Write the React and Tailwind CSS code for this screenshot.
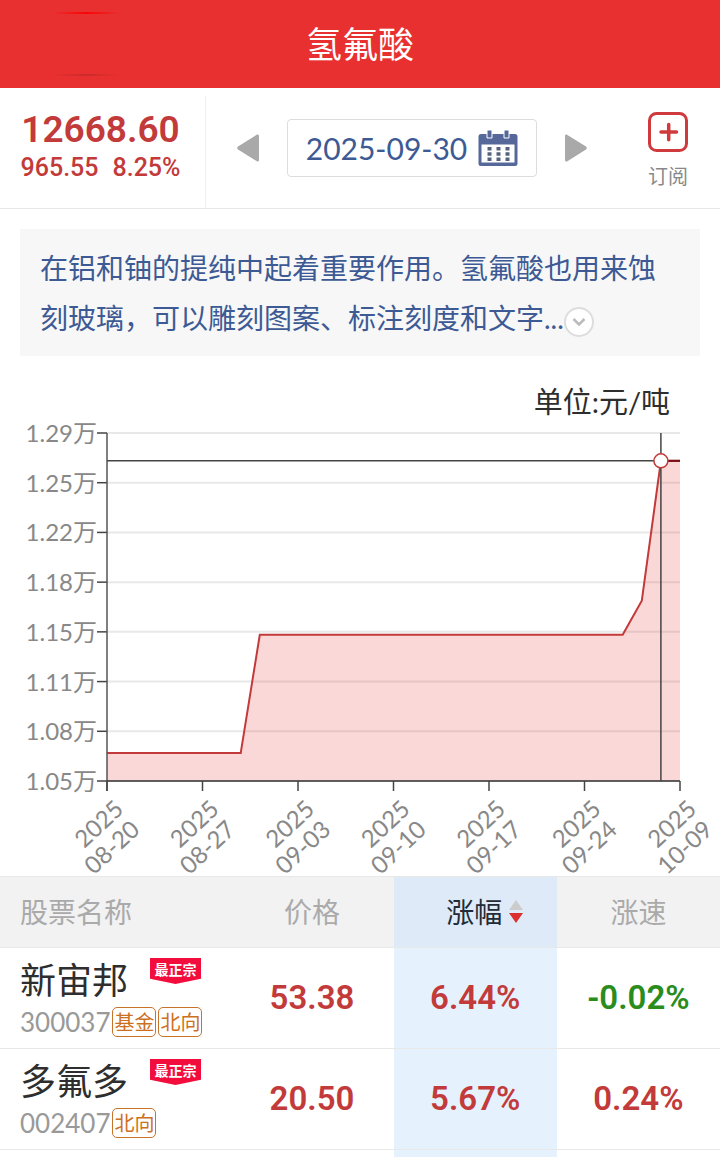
import { useState } from 'react';

const stocks = [
  { name: '新宙邦', code: '300037', tags: ['基金', '北向'], price: '53.38', change: '6.44%', speed: '-0.02%' },
  { name: '多氟多', code: '002407', tags: ['北向'], price: '20.50', change: '5.67%', speed: '0.24%' },
];

// one value per trading day, 08-20 to 10-09
const prices = [
  ...Array(8).fill(10651),
  ...Array(20).fill(11468),
  11703,
  12668.6,
  12668.6,
];
const dates = ['08-20', '08-27', '09-03', '09-10', '09-17', '09-24', '10-09'];

// ---------------------- CHART ----------------------
const LEFT = 107;
const RIGHT = 680;
const TOP = 17;
const BOTTOM = 365;
const MIN = 10458;
const MAX = 12861;
const Y_STEPS = 7;

const xAt = (i) => LEFT + ((RIGHT - LEFT) * i) / (prices.length - 1);
const yAt = (v) => BOTTOM - ((BOTTOM - TOP) * (v - MIN)) / (MAX - MIN);

function PriceChart({ active }) {
  const points = prices.map((p, i) => `${xAt(i)},${yAt(p)}`).join(' ');
  const levels = Array.from({ length: Y_STEPS + 1 }, (_, i) => MIN + ((MAX - MIN) * i) / Y_STEPS);
  const ax = xAt(active);
  const ay = yAt(prices[active]);

  return (
    <svg
      viewBox="0 0 720 460"
      className="block h-auto w-full overflow-visible font-['Lato','Noto_Sans_CJK_SC',sans-serif]"
    >
      {levels.map((v) => (
        <g key={v}>
          <line x1={LEFT} x2={RIGHT} y1={yAt(v)} y2={yAt(v)} stroke="#e8e8e8" strokeWidth="2" />
          <line x1={LEFT - 10} x2={LEFT} y1={yAt(v)} y2={yAt(v)} stroke="#444" strokeWidth="1.5" />
          <text x="97" y={yAt(v) + 9} textAnchor="end" fontSize="24" fill="#888">
            {(v / 10000).toFixed(2)}万
          </text>
        </g>
      ))}

      <polygon points={`${LEFT},${BOTTOM} ${points} ${RIGHT},${BOTTOM}`} fill="#e83030" fillOpacity="0.19" />
      <polyline points={points} fill="none" stroke="#c23a3a" strokeWidth="2" />

      <line x1={LEFT} x2={LEFT} y1={TOP} y2={BOTTOM + 10} stroke="#555" strokeWidth="1.5" />
      <line x1={LEFT} x2={RIGHT} y1={BOTTOM} y2={BOTTOM} stroke="#333" strokeWidth="1.5" />

      {dates.map((d, i) => {
        const x = LEFT + ((RIGHT - LEFT) * i) / (dates.length - 1);
        return (
          <g key={d}>
            <line x1={x} x2={x} y1={BOTTOM} y2={BOTTOM + 10} stroke="#444" strokeWidth="1.5" />
            <g transform={`translate(${x + 18} 395) rotate(-43)`} textAnchor="end" fontSize="24" fill="#888">
              <text>2025</text>
              <text x="-2" y="26">{d}</text>
            </g>
          </g>
        );
      })}

      <line x1={LEFT} x2={RIGHT} y1={ay} y2={ay} stroke="#444" strokeWidth="1.5" />
      <line x1={ax} x2={RIGHT} y1={ay} y2={ay} stroke="#7a1018" strokeWidth="2" />
      <line x1={ax} x2={ax} y1={TOP} y2={BOTTOM} stroke="#444" strokeWidth="1.5" />
      <circle cx={ax} cy={ay} r="7" fill="#fff" stroke="#c23a3a" strokeWidth="1.5" />
    </svg>
  );
}

// ---------------------- ICONS ----------------------
function Arrow({ className }) {
  return (
    <svg viewBox="0 0 22 28" className={`w-[22px] h-7 ${className}`}>
      <path d="M20 .5Q22 0 22 2V26Q22 28 20 27.3L1 15.5Q-.6 14 1 12.5Z" fill="#a9a9a9" />
    </svg>
  );
}

function CalendarIcon() {
  return (
    <svg viewBox="0 0 40 36" className="w-10 h-9 shrink-0">
      <rect x="0.5" y="4" width="39" height="32" rx="2.5" fill="#56689a" />
      <rect x="3.5" y="14.5" width="33" height="18" fill="#fff" />
      <path d="M9 0h5v8H9zM26 0h5v8h-5z" fill="#56689a" stroke="#fff" strokeWidth="1" />
      <path
        d="M9.5 17h4v3.500h-4zM18.500 17h4v3.500h-4zM27.500 17h4v3.500h-4zM9.500 22.200h4v3.500h-4zM18.500 22.200h4v3.500h-4zM27.500 22.200h4v3.500h-4zM9.500 27.400h4v3.500h-4zM18.500 27.400h4v3.500h-4zM27.500 27.400h4v3.500h-4z"
        fill="#56627c"
      />
    </svg>
  );
}

function Badge({ children }) {
  return (
    <span className="h-[26px] w-[51px] bg-[#f20d3c] text-center text-sm leading-6 font-bold text-white [clip-path:polygon(0_0,100%_0,100%_80%,50%_100%,0_80%)]">
      {children}
    </span>
  );
}

function StockRow({ stock }) {
  const getColor = (value) => (value.startsWith('-') ? 'text-[#2a8c1c]' : 'text-[#c23a3a]');

  return (
    <tr className="h-[101px] border-b border-[#e8e8e8] font-['Roboto',sans-serif] text-[33px] font-semibold">
      <td className="pl-5 text-left font-['Lato','Noto_Sans_CJK_SC',sans-serif] font-normal">
        <div className="flex items-start gap-[22px]">
          <span className="text-[36px] leading-[44px] text-[#2e2e2e]">{stock.name}</span>
          <Badge>最正宗</Badge>
        </div>
        <div className="mt-1 flex items-center gap-[2px]">
          <span className="text-[26px] leading-8 text-[#999]">{stock.code}</span>
          {stock.tags.map((tag) => (
            <span
              key={tag}
              className="shrink-0 rounded-[5px] border border-[#c8732a] px-[1px] text-xl leading-7 text-[#cc701e]"
            >
              {tag}
            </span>
          ))}
        </div>
      </td>
      <td className="text-[#c23a3a]">{stock.price}</td>
      <td className={`bg-[#e5f2fe] ${getColor(stock.change)}`}>{stock.change}</td>
      <td className={getColor(stock.speed)}>{stock.speed}</td>
    </tr>
  );
}

export default function App() {
  const [active, setActive] = useState(29);
  const [expanded, setExpanded] = useState(false);

  const step = (n) => setActive(Math.min(prices.length - 1, Math.max(0, active + n)));

  return (
    <div className="min-h-screen bg-white font-['Lato','Noto_Sans_CJK_SC',sans-serif]">
      <header className="grid h-[88px] grid-cols-3 items-center bg-[#e83030]">
        <div className="ml-13 flex h-16 w-17 flex-col justify-between">
          <div className="h-[2px] bg-linear-to-r from-transparent via-[#fa0505] to-transparent"></div>
          <div className="h-[2px] bg-linear-to-r from-transparent via-[#cc2a2a] to-transparent"></div>
        </div>
        <h1 className="text-center text-[36px] text-white">氢氟酸</h1>
      </header>

      {/* Quote and date picker */}
      <section className="flex h-[121px] border-b border-[#e8e8e8]">
        <div className="mt-2 flex w-[206px] shrink-0 flex-col items-center border-r border-[#eee] pt-3 pr-1 font-['Roboto',sans-serif] text-[#c23a3a]">
          <p className="text-[37px] leading-[44px] font-semibold">12668.60</p>
          <p className="flex gap-[14px] text-[25px] leading-8 font-medium">
            <span>965.55</span>
            <span>8.25%</span>
          </p>
        </div>
        <div className="flex flex-1 items-center justify-center gap-7 pr-[30px]">
          <button type="button" aria-label="前一天" onClick={() => step(-1)}>
            <Arrow className="" />
          </button>
          <button
            type="button"
            className="flex h-[58px] items-center gap-[11px] rounded-[4px] border border-[#ddd] px-[18px] text-[30px] text-[#3d5a94]"
          >
            2025-09-30
            <CalendarIcon />
          </button>
          <button type="button" aria-label="后一天" onClick={() => step(1)}>
            <Arrow className="rotate-180" />
          </button>
        </div>
        <button type="button" className="mr-8 flex shrink-0 flex-col items-center gap-[10px] pt-6 text-xl text-[#888]">
          <svg viewBox="0 0 40 40" className="size-10" fill="none" stroke="#cf3a3c">
            <rect x="1.5" y="1.5" width="37" height="37" rx="7" strokeWidth="3" />
            <path d="M13 20H28.500M20.700 12.500V27.800" strokeWidth="3.500" strokeLinecap="round" />
          </svg>
          订阅
        </button>
      </section>

      {/* Description */}
      <section className="mx-5 mt-5 bg-[#f7f7f7] px-5 pt-[14px] pb-[13px] text-[28px] leading-[50px] text-[#3d5a94]">
        在铝和铀的提纯中起着重要作用。氢氟酸也用来蚀刻玻璃，可以雕刻图案、标注刻度和文字...
        <button
          type="button"
          aria-label="展开"
          aria-expanded={expanded}
          onClick={() => setExpanded(!expanded)}
          className="inline-flex size-[30px] items-center justify-center rounded-full border-2 border-[#ddd] bg-white align-middle"
        >
          <svg viewBox="0 0 14 10" className="w-[14px]" fill="none" stroke="#bbb" strokeWidth="2.5">
            <path d="M1.5 2L7 7.5L12.5 2" />
          </svg>
        </button>
      </section>

      <p className="mt-8 pr-[50px] text-right text-[29px] leading-7 text-[#2e2e2e]">单位:元/吨</p>
      <PriceChart active={active} />

      {/* Stocks */}
      <table className="w-full table-fixed border-collapse text-center">
        <thead>
          <tr className="h-[71px] border-y border-[#e8e8e8] bg-[#f2f2f2] text-[28px] text-[#aaa]">
            <th className="w-[32%] pl-5 text-left font-normal">股票名称</th>
            <th className="font-normal">价格</th>
            <th className="bg-[#deeaf7] font-normal text-[#222b36]">
              <button type="button" className="ml-5 inline-flex items-center gap-[6px]">
                涨幅
                <svg viewBox="0 0 16 24" className="w-4">
                  <path d="M8 0L15 10H1Z" fill="#ccc" />
                  <path d="M8 23L15 13H1Z" fill="#dc3030" />
                </svg>
              </button>
            </th>
            <th className="font-normal">涨速</th>
          </tr>
        </thead>
        <tbody>
          {stocks.map((stock) => (
            <StockRow key={stock.code} stock={stock} />
          ))}
          <tr className="h-2">
            <td></td>
            <td></td>
            <td className="bg-[#e5f2fe]"></td>
            <td></td>
          </tr>
        </tbody>
      </table>
    </div>
  );
}
